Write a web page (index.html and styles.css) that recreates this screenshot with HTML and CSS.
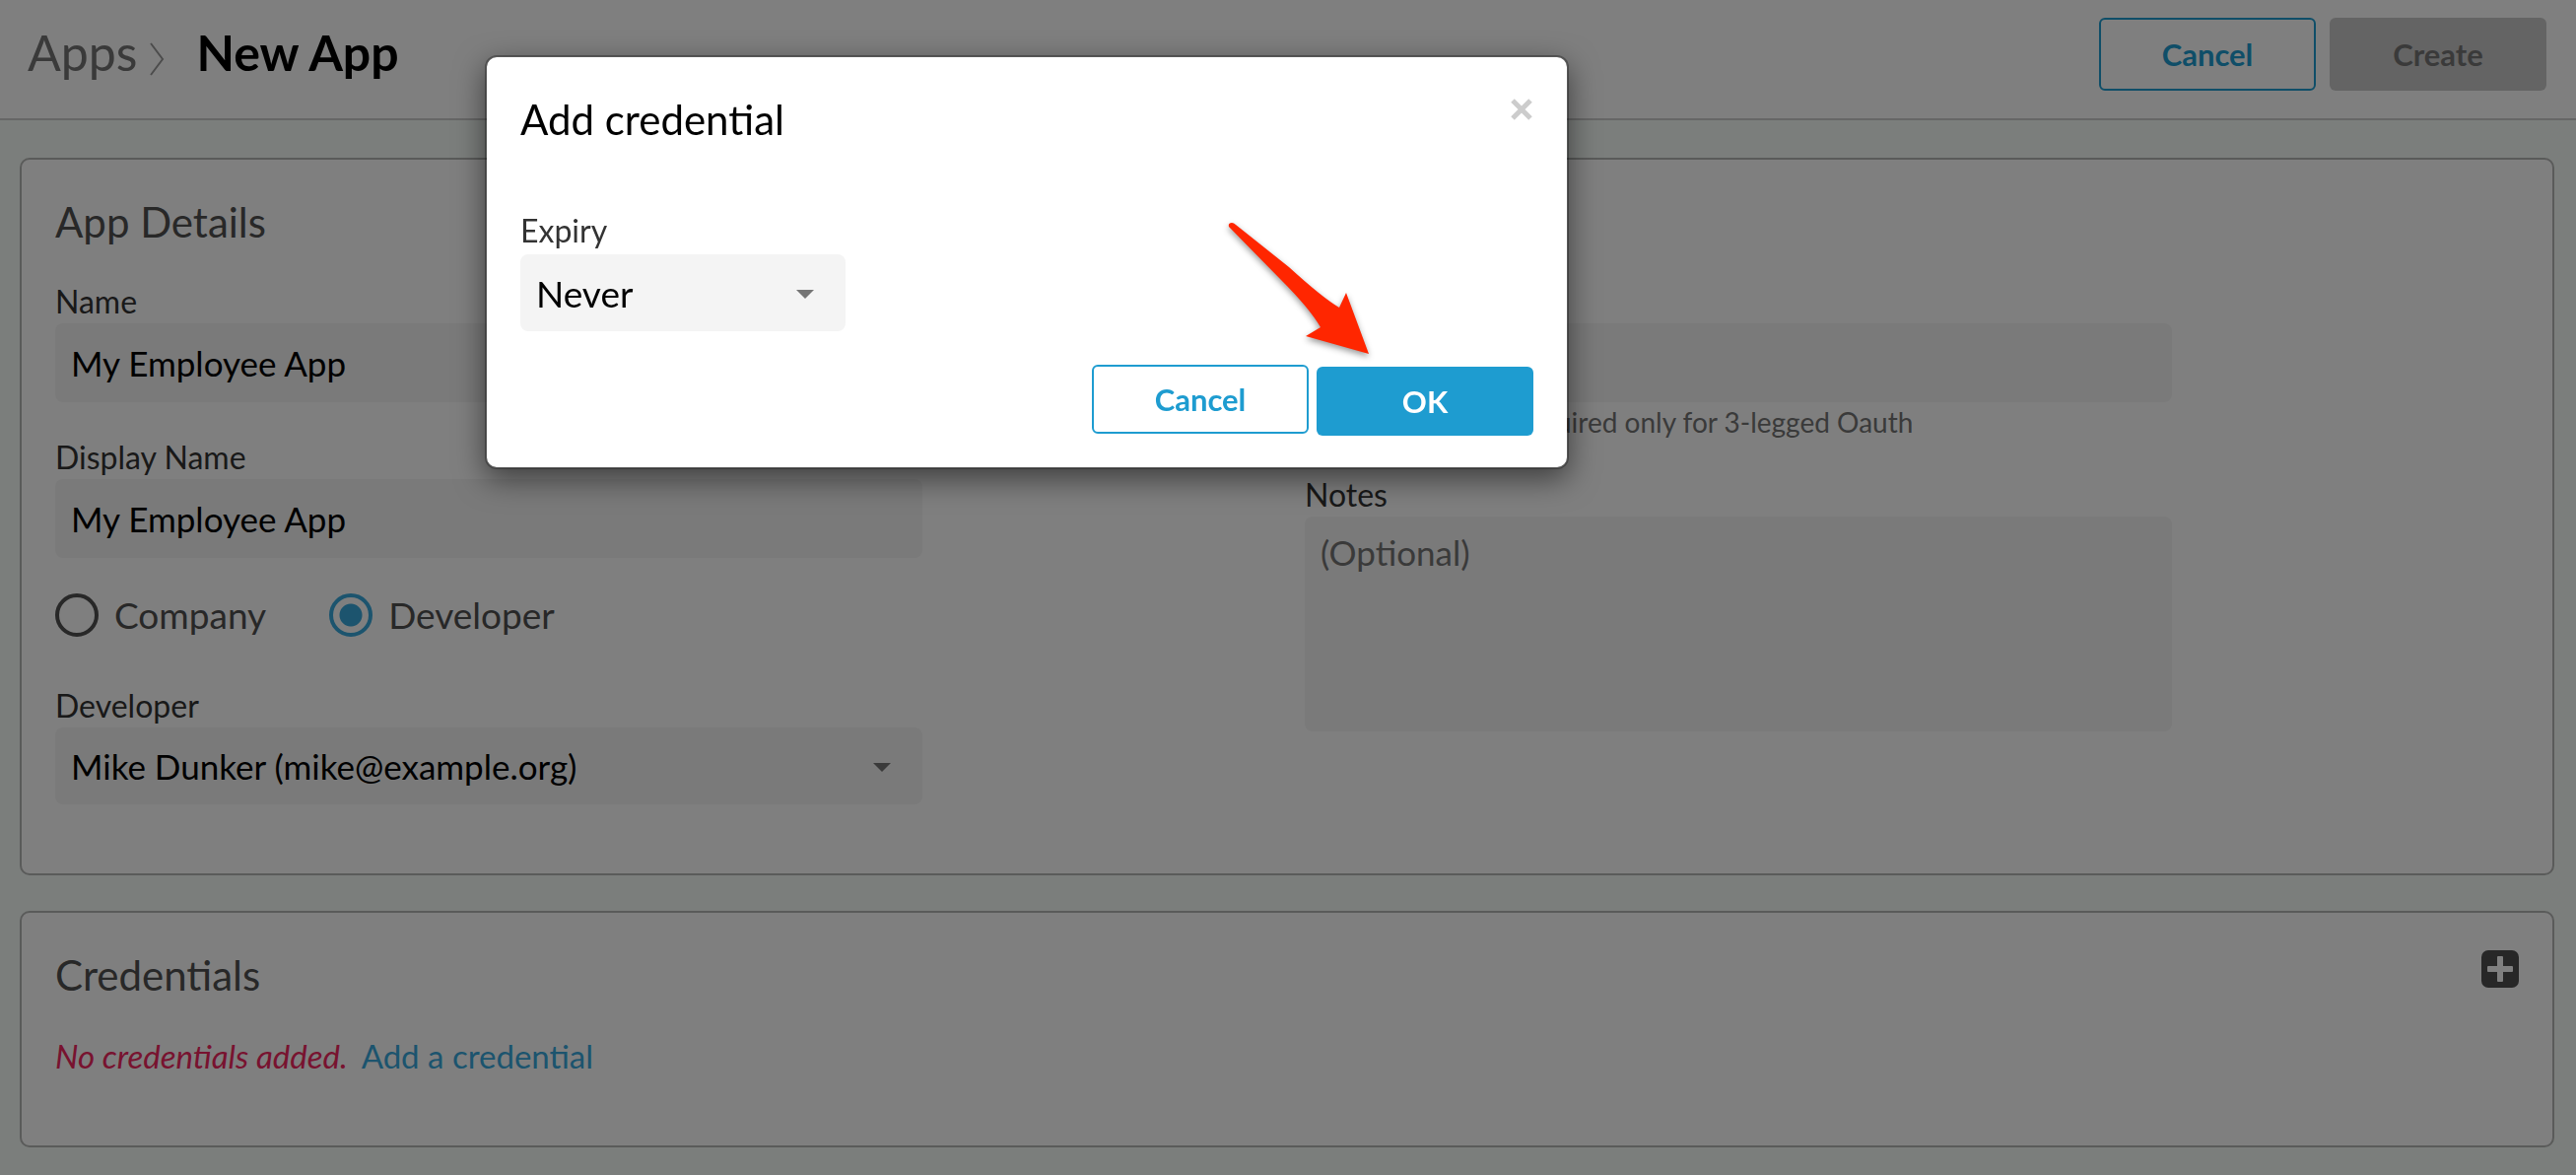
FILE: index.html
```html
<!DOCTYPE html>
<html lang="en">
<head>
<meta charset="utf-8">
<meta name="viewport" content="width=device-width, initial-scale=1">
<title>New App</title>
<link rel="stylesheet" href="styles.css">
</head>
<body>
<header class="topbar">
  <nav class="crumbs" aria-label="Breadcrumb">
    <a class="crumb-link" href="#apps">Apps</a>
    <svg class="crumb-sep" viewBox="0 0 16 34" aria-hidden="true"><path d="M2 1 L14 17 L2 33"/></svg>
    <h1 class="crumb-current">New App</h1>
  </nav>
  <div class="topbar-actions">
    <button class="btn btn-outline" type="button">Cancel</button>
    <button class="btn btn-disabled" type="button" disabled>Create</button>
  </div>
</header>

<main class="content">
  <section class="card">
    <h2 class="card-title">App Details</h2>
    <form class="details">
      <div class="column">
        <div class="field">
          <label class="label" for="name">Name</label>
          <input class="control" id="name" type="text" value="My Employee App">
        </div>
        <div class="field">
          <label class="label" for="display-name">Display Name</label>
          <input class="control" id="display-name" type="text" value="My Employee App">
        </div>
        <div class="radios" role="radiogroup" aria-label="Owner">
          <label class="radio"><input type="radio" name="owner">Company</label>
          <label class="radio"><input type="radio" name="owner" checked>Developer</label>
        </div>
        <div class="field">
          <label class="label" for="developer">Developer</label>
          <div class="select">
            <select class="control" id="developer"><option>Mike Dunker (mike@example.org)</option></select>
          </div>
        </div>
      </div>
      <div class="column">
        <div class="field">
          <label class="label" for="callback">Callback URL</label>
          <input class="control" id="callback" type="text">
          <p class="hint">A callback URL is required only for 3-legged Oauth</p>
        </div>
        <div class="field">
          <label class="label" for="notes">Notes</label>
          <textarea class="control notes" id="notes" placeholder="(Optional)"></textarea>
        </div>
      </div>
    </form>
  </section>

  <section class="card">
    <div class="card-head">
      <h2 class="card-title">Credentials</h2>
      <button class="icon-btn" type="button" aria-label="Add credential">
        <svg viewBox="0 0 38 38" aria-hidden="true">
          <rect width="38" height="38" rx="7" fill="#4e4e4e"/>
          <rect x="6" y="16" width="26" height="6" rx="1" fill="#fff"/>
          <rect x="16" y="6" width="6" height="26" rx="1" fill="#fff"/>
        </svg>
      </button>
    </div>
    <p class="empty"><em>No credentials added.</em><a href="#add">Add a credential</a></p>
  </section>
</main>

<div class="backdrop"></div>
<div class="dialog" role="dialog" aria-modal="true" aria-labelledby="dialog-title">
  <div class="dialog-head">
    <h2 class="dialog-title" id="dialog-title">Add credential</h2>
    <button class="close" type="button" aria-label="Close">
      <svg viewBox="0 0 24 24" aria-hidden="true"><path d="M3 3 L21 21 M21 3 L3 21"/></svg>
    </button>
  </div>
  <div class="expiry">
    <label class="label" for="expiry">Expiry</label>
    <div class="select">
      <select class="control" id="expiry"><option>Never</option></select>
    </div>
  </div>
  <div class="dialog-actions">
    <button class="btn btn-outline" type="button">Cancel</button>
    <button class="btn btn-primary" type="button">OK</button>
  </div>
  <svg class="pointer" viewBox="0 0 150 146" aria-hidden="true">
    <path d="M7 10 Q6 6 10 6 Q12 6 14 8 L68 51 Q102 82 119 92 L126 77 L149 139 L85 121 L100 112 Q89 93 60 64 Z"/>
  </svg>
</div>
</body>
</html>
```
FILE: styles.css
```css
* {
  box-sizing: border-box;
}

body {
  margin: 0;
  min-height: 100vh;
  background: #f7fcf8;
  color: #333;
  font-family: Lato, Carlito, sans-serif;
  font-size: 32px;
}

h1, h2, p {
  margin: 0;
  font-weight: 400;
}

button, input, select, textarea {
  margin: 0;
  font-family: inherit;
}

a {
  text-decoration: none;
}

/* Header */
.topbar {
  display: flex;
  justify-content: space-between;
  align-items: flex-start;
  padding: 18px 30px 28px 28px;
  background: #fff;
  border-bottom: 2px solid #ccc;
}

.crumbs {
  display: flex;
  align-items: center;
  font-size: 50px;
  line-height: 70px;
}

.crumb-link {
  color: #757575;
}

.crumb-sep {
  width: 16px;
  height: 34px;
  margin: 14px 32px 0 12px;
  fill: none;
  stroke: #999;
  stroke-width: 2;
}

.crumb-current {
  color: #000;
  font-size: 50px;
  font-weight: 700;
}

.topbar-actions {
  display: flex;
  gap: 14px;
}

.btn {
  width: 220px;
  height: 74px;
  padding: 0;
  border: 0;
  border-radius: 6px;
  font-size: 31px;
  font-weight: 700;
}

.btn-outline {
  border: 2px solid #1e9cd0;
  background: #fff;
  color: #1e9cd0;
}

.btn-primary {
  background: #1e9cd0;
  color: #fff;
}

.btn-disabled {
  background: #c9c9c9;
  color: #757575;
}

/* Cards */
.content {
  display: grid;
  gap: 36px;
  padding: 38px 22px 28px 20px;
}

.card {
  padding: 38px 34px 70px;
  background: #fff;
  border: 2px solid #b4b6b4;
  border-radius: 10px;
}

.card-title {
  margin-bottom: 34px;
  color: #505050;
  font-size: 42px;
  line-height: 50px;
}

.card-head {
  display: flex;
  justify-content: space-between;
  align-items: flex-start;
}

.details {
  display: grid;
  grid-template-columns: 880px 880px;
  column-gap: 388px;
}

.column {
  display: flex;
  flex-direction: column;
  gap: 34px;
}

.label {
  display: block;
  color: #333;
  font-size: 32px;
  line-height: 44px;
}

.control {
  display: block;
  width: 100%;
  height: 80px;
  padding: 0 16px;
  border: 0;
  border-radius: 8px;
  outline: 0;
  background: #f4f4f4;
  color: #000;
  font-size: 35px;
  appearance: none;
}

.notes {
  height: 218px;
  padding: 14px 16px;
  line-height: 44px;
  resize: none;
}

.notes::placeholder {
  color: #757575;
  opacity: 1;
}

.select {
  position: relative;
}

.select .control {
  height: 78px;
}

.select::after {
  content: "";
  position: absolute;
  top: 36px;
  right: 32px;
  border: 9px solid transparent;
  border-top-color: #757575;
  border-bottom: 0;
  pointer-events: none;
}

.hint {
  padding-top: 2px;
  color: #757575;
  font-size: 28px;
  line-height: 36px;
}

.radios {
  display: flex;
  gap: 64px;
  padding: 2px 0 14px;
}

.radio {
  display: flex;
  align-items: center;
  gap: 16px;
  color: #505050;
  font-size: 37px;
  line-height: 44px;
}

.radio input {
  width: 44px;
  height: 44px;
  margin: 0;
  border: 4px solid #505050;
  border-radius: 50%;
  appearance: none;
}

.radio input:checked {
  border-color: #38a9dd;
  background: radial-gradient(circle, #38a9dd 0 11px, transparent 12px);
}

.icon-btn {
  width: 38px;
  height: 38px;
  padding: 0;
  border: 0;
  background: none;
}

.icon-btn svg {
  display: block;
}

.empty {
  display: flex;
  gap: 14px;
  padding-top: 2px;
  font-size: 33px;
  line-height: 42px;
}

.empty em {
  color: #f0265f;
}

.empty a {
  color: #38a9dd;
}

/* Dialog */
.backdrop {
  position: fixed;
  inset: 0;
  background: rgba(0, 0, 0, 0.5);
}

.dialog {
  position: absolute;
  top: 56px;
  left: 492px;
  width: 1100px;
  padding: 38px 34px 32px;
  background: #fff;
  background-clip: padding-box;
  border: 2px solid rgba(0, 0, 0, 0.3);
  border-radius: 12px;
  box-shadow: 0 10px 30px rgba(0, 0, 0, 0.5);
}

.dialog-head {
  display: flex;
  justify-content: space-between;
  align-items: flex-start;
  margin-bottom: 66px;
}

.dialog-title {
  color: #000;
  font-size: 42px;
  line-height: 50px;
}

.close {
  width: 24px;
  height: 30px;
  padding: 3px 0;
  border: 0;
  background: none;
}

.close svg {
  display: block;
  fill: none;
  stroke: #ccc;
  stroke-width: 5;
}

.expiry {
  display: grid;
  gap: 2px;
  width: 330px;
}

.expiry .control {
  font-size: 37px;
}

.dialog-actions {
  display: flex;
  justify-content: flex-end;
  gap: 8px;
  margin-top: 34px;
}

.dialog-actions .btn {
  height: 70px;
}

.dialog-actions .btn-primary {
  margin-top: 2px;
}

/* Pointer laid over the dialog, aimed at the confirm button */
.pointer {
  position: absolute;
  top: 162px;
  left: 746px;
  width: 150px;
  height: 146px;
  overflow: visible;
  fill: #ff2600;
  filter: drop-shadow(0 3px 3px rgba(0, 0, 0, 0.4));
}
```
